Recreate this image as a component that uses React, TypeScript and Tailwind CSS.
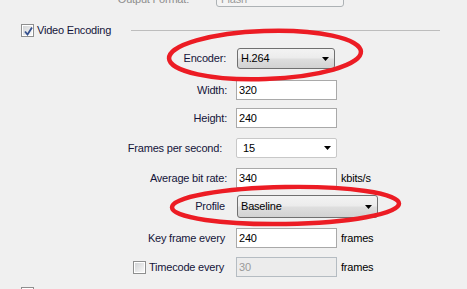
import React from "react";

const Arrow = () => (
  <svg width="7" height="4" viewBox="0 0 7 4" className="shrink-0">
    <path d="M0 0h7L3.5 4z" fill="#000" />
  </svg>
);

const Label = ({ children, pr = "pr-0" }: { children: React.ReactNode; pr?: string }) => (
  <div className={`w-[227px] shrink-0 flex justify-end items-center text-[#14143a] ${pr}`}>{children}</div>
);

const Input = ({ value, disabled }: { value: string; disabled?: boolean }) => (
  <div
    className={
      disabled
        ? "ml-[9px] w-[101px] h-[20px] border border-[#b5bcc2] bg-[#ececec] text-[#9a9a9a] pl-[2px] flex items-center"
        : "ml-[9px] w-[101px] h-[20px] border border-[#a9a9a9] bg-white text-black pl-[2px] flex items-center"
    }
  >
    {value}
  </div>
);

const Combo = ({ value, width }: { value: string; width: string }) => (
  <div
    className={`ml-[10px] ${width} h-full border border-[#707070] rounded-[3px] bg-[linear-gradient(to_bottom,#f3f3f3_0%,#ececec_45%,#dedede_55%,#d2d2d2_100%)] flex items-center justify-between pl-[3px] pr-[5px] text-black`}
  >
    <span>{value}</span>
    <Arrow />
  </div>
);

const CheckBox = ({ checked }: { checked?: boolean }) => (
  <div className="w-[13px] h-[13px] border border-[#8e8f8f] bg-white p-px shrink-0">
    <div className="w-full h-full bg-[linear-gradient(135deg,#d2d4d6,#f8f8f8)] relative">
      {checked && (
        <svg width="11" height="11" viewBox="0 0 11 11" className="absolute inset-0">
          <path d="M2 5.5 L4.5 8.5 L9 1.5" stroke="#34508e" strokeWidth="1.8" fill="none" />
        </svg>
      )}
    </div>
  </div>
);

export default function App() {
  return (
    <div className="relative w-[467px] h-[289px] overflow-hidden bg-[#f0f0f0] font-['Liberation_Sans',Arial,sans-serif] text-[11px] tracking-[-0.2px] leading-none">
      {/* output format row, mostly scrolled off */}
      <div className="flex items-start h-[21px] -mt-[14px]">
        <div className="w-[189px] text-right text-[#8d8d8d] mt-[8px]">Output Format:</div>
        <div className="ml-[27px] w-[128px] h-full border border-[#adb2b5] rounded-[3px] bg-[#f4f4f4] flex items-start pt-[7px] pl-[4px] text-[#9a9a9a]">
          Flash
        </div>
      </div>

      {/* Video Encoding group header */}
      <div className="flex items-center h-[13px] mt-[17px]">
        <div className="w-[131px] pl-[21px] flex items-center gap-[3px] text-[#14143a]">
          <CheckBox checked />
          <span>Video Encoding</span>
        </div>
        <div className="w-[309px] h-px bg-[#bdbdbd]" />
      </div>

      <div className="flex items-center h-[21px] mt-[11px]">
        <Label pr="pr-[1px]">Encoder:</Label>
        <Combo value="H.264" width="w-[98px]" />
      </div>

      <div className="flex items-center h-[20px] mt-[11px]">
        <Label>Width:</Label>
        <Input value="320" />
      </div>

      <div className="flex items-center h-[20px] mt-[8px]">
        <Label>Height:</Label>
        <Input value="240" />
      </div>

      <div className="flex items-center h-[20px] mt-[10px]">
        <Label pr="pr-[5px]">Frames per second:</Label>
        <div className="ml-[9px] w-[101px] h-full border border-[#c8c8c8] rounded-[2px] bg-white flex items-center justify-between pl-[6px] pr-[5px] text-black">
          <span>15</span>
          <Arrow />
        </div>
      </div>

      <div className="flex items-center h-[20px] mt-[10px]">
        <Label>Average bit rate:</Label>
        <Input value="340" />
        <span className="ml-[4px] text-black">kbits/s</span>
      </div>

      <div className="flex items-center h-[23px] mt-[7px]">
        <Label pr="pr-[2px]">Profile</Label>
        <Combo value="Baseline" width="w-[141px]" />
      </div>

      <div className="flex items-center h-[20px] mt-[10px]">
        <Label pr="pr-[2px]">Key frame every</Label>
        <Input value="240" />
        <span className="ml-[4px] text-black">frames</span>
      </div>

      <div className="flex items-center h-[20px] mt-[9px]">
        <Label pr="pr-[3px]">
          <div className="flex items-center gap-[3px]">
            <CheckBox />
            <span>Timecode every</span>
          </div>
        </Label>
        <Input value="30" disabled />
        <span className="ml-[4px] text-black">frames</span>
      </div>

      <div className="flex items-center h-[13px] mt-[10px] pl-[21px]">
        <CheckBox />
      </div>

      {/* hand-drawn red highlights over the form */}
      <svg className="absolute inset-0 pointer-events-none" width="467" height="289">
        <ellipse cx="265" cy="55" rx="96" ry="24" fill="none" stroke="#ec1c24" strokeWidth="4.5" transform="rotate(-2 265 55)" />
        <ellipse cx="285.5" cy="205.5" rx="113.5" ry="18.5" fill="none" stroke="#ec1c24" strokeWidth="4.5" transform="rotate(-1 285 205)" />
      </svg>
    </div>
  );
}
